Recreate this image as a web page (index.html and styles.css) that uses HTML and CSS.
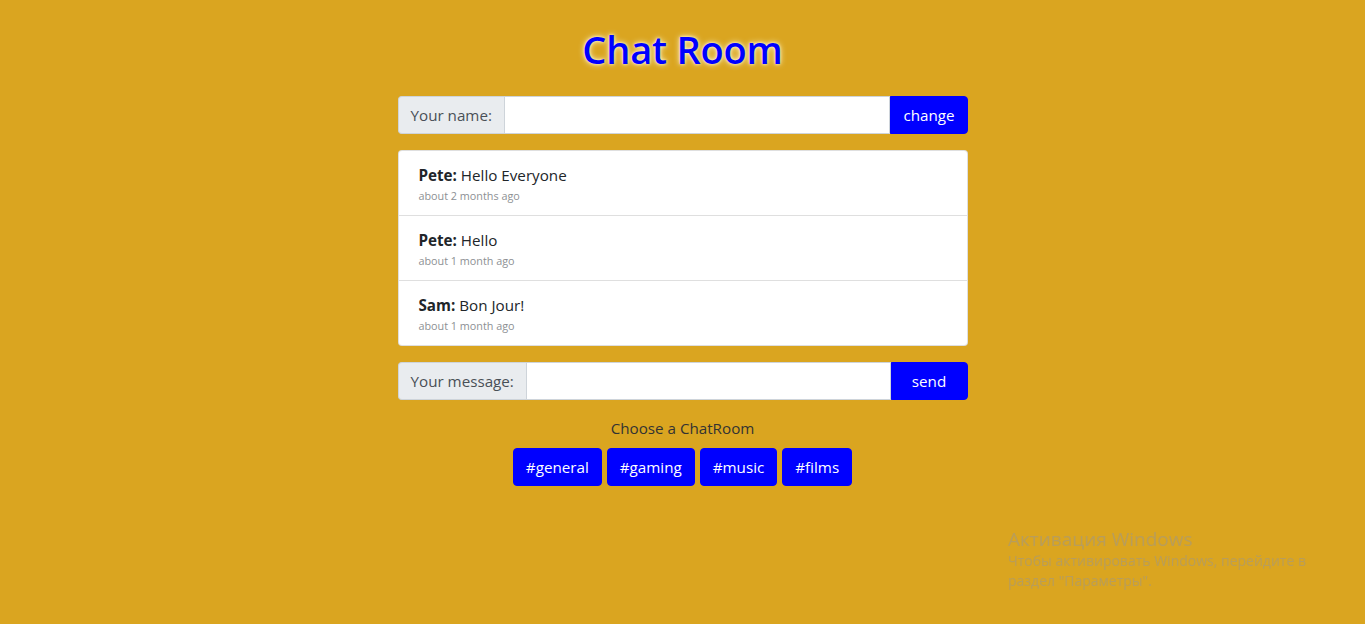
FILE: index.html
```html
<!DOCTYPE html>
<html lang="en">
<head>
<meta charset="utf-8">
<title>Chat Room</title>
<link rel="stylesheet" href="styles.css">
</head>
<body>
<div class="container">
  <h1 class="title">Chat Room</h1>

  <div class="input-group">
    <span class="addon">Your name:</span>
    <input class="field" type="text">
    <button class="btn btn-attach">change</button>
  </div>

  <ul class="messages">
    <li class="message">
      <div class="line"><strong>Pete:</strong> Hello Everyone</div>
      <small class="time">about 2 months ago</small>
    </li>
    <li class="message">
      <div class="line"><strong>Pete:</strong> Hello</div>
      <small class="time">about 1 month ago</small>
    </li>
    <li class="message">
      <div class="line"><strong>Sam:</strong> Bon Jour!</div>
      <small class="time">about 1 month ago</small>
    </li>
  </ul>

  <div class="input-group">
    <span class="addon">Your message:</span>
    <input class="field" type="text">
    <button class="btn btn-attach btn-send">send</button>
  </div>

  <p class="choose">Choose a ChatRoom</p>
  <div class="rooms">
    <button class="btn">#general</button>
    <button class="btn">#gaming</button>
    <button class="btn">#music</button>
    <button class="btn">#films</button>
  </div>
</div>

<div class="watermark">
  <div class="wm-title">Активация Windows</div>
  <div class="wm-text">Чтобы активировать Windows, перейдите в<br>раздел "Параметры".</div>
</div>
</body>
</html>
```

FILE: styles.css
```css
* { box-sizing: border-box; }

html, body {
  margin: 0;
  padding: 0;
}

body {
  background: #daa520;
  font-family: "Open Sans", "Noto Sans", sans-serif;
  font-size: 15.2px;
  line-height: 24px;
  color: #212529;
  min-height: 624px;
}

.container {
  width: 570px;
  margin: 0 auto;
  padding-top: 26px;
}

.title {
  margin: 0 0 24px;
  text-align: center;
  font-size: 38px;
  font-weight: 600;
  line-height: 46px;
  color: #0000ff;
  text-shadow: 0 0 6px #fff8d0, 0 0 3px #fffbe0;
  letter-spacing: -0.2px;
}

.input-group {
  display: flex;
  height: 38px;
}

.addon {
  display: flex;
  align-items: center;
  padding: 0 12px;
  background: #e9ecef;
  border: 1px solid #ced4da;
  border-right: 0;
  border-radius: 4px 0 0 4px;
  color: #495057;
  white-space: nowrap;
}

.field {
  flex: 1;
  min-width: 0;
  border: 1px solid #ced4da;
  background: #fff;
  font: inherit;
  padding: 0 12px;
  outline: none;
}

.btn {
  background: #0000ff;
  color: #fff;
  border: 1px solid #0000ff;
  border-radius: 4px;
  font: inherit;
  height: 38px;
  padding: 0 12px;
  cursor: pointer;
}

.btn-attach {
  border-radius: 0 4px 4px 0;
}

.btn-send {
  width: 77px;
}

.messages {
  list-style: none;
  margin: 16px 0;
  padding: 0;
  background: #fff;
  border: 1px solid rgba(0,0,0,0.125);
  border-radius: 4px;
}

.message {
  padding: 12px 20px 11px;
  border-top: 1px solid rgba(0,0,0,0.125);
}

.message:first-child {
  border-top: 0;
}

.line {
  line-height: 24px;
}

.line strong {
  font-weight: 700;
}

.time {
  display: block;
  font-size: 10.8px;
  line-height: 17px;
  color: #8d9094;
}

.choose {
  margin: 16px 0 8px;
  text-align: center;
  color: #333;
}

.rooms {
  display: flex;
  justify-content: center;
  gap: 5px;
}

.watermark {
  position: fixed;
  left: 1008px;
  top: 527px;
  color: rgba(150,150,150,0.5);
  font-family: "Open Sans", "Noto Sans", sans-serif;
}

.wm-title {
  font-size: 19px;
  line-height: 24px;
}

.wm-text {
  font-size: 14px;
  line-height: 20px;
}
```
